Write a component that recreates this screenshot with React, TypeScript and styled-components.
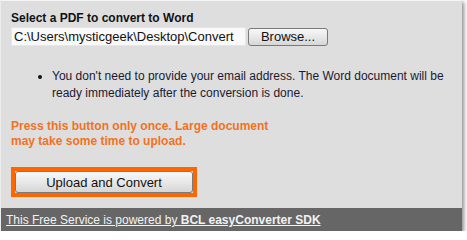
import React from "react";
import styled, { createGlobalStyle } from "styled-components";

const GlobalStyle = createGlobalStyle`
  body {
    margin: 0;
    background: #ffffff;
    font-family: "Liberation Sans", Arial, sans-serif;
  }
`;

// Styles
const Panel = styled.div`
  width: 462px;
  height: 231px;
  display: flex;
  flex-direction: column;
  background: #dedede;
  border-top: 1px solid #f4f4f4;
  border-left: 1px solid #ececec;
  box-sizing: border-box;
  box-shadow: 2px 2px 4px rgba(0, 0, 0, 0.45);
`;

const Content = styled.div`
  flex: 1;
  display: flex;
  flex-direction: column;
  align-items: flex-start;
  padding: 10px 0 0 10px;
`;

const Title = styled.div`
  font-size: 12px;
  line-height: 14px;
  font-weight: bold;
  color: #111111;
`;

const FileRow = styled.div`
  display: flex;
  align-items: center;
  gap: 2px;
  margin-top: 2px;
`;

const PathField = styled.div`
  width: 235px;
  height: 19px;
  box-sizing: border-box;
  background: #f9f9f9;
  border: 1px solid #e6e6e6;
  padding-left: 2px;
  font-size: 13px;
  line-height: 17px;
  color: #111111;
  white-space: nowrap;
  overflow: hidden;
`;

const GrayButton = styled.button<{ $w: number; $h: number }>`
  width: ${(p) => p.$w}px;
  height: ${(p) => p.$h}px;
  padding: 0;
  margin: 0;
  font-family: "Liberation Sans", Arial, sans-serif;
  font-size: 13px;
  color: #111111;
  background: linear-gradient(#f8f8f8, #e8e8e8 50%, #d6d6d6);
  border: 1px solid #7a7a7a;
  border-radius: 3px;
  box-sizing: border-box;
`;

const Notes = styled.div`
  display: flex;
  align-items: flex-start;
  margin-top: 22px;
`;

const Dot = styled.span`
  width: 4px;
  height: 4px;
  border-radius: 50%;
  background: #111111;
  flex: none;
  margin: 7px 10px 0 27px;
`;

const NoteText = styled.div`
  width: 410px;
  font-size: 12px;
  line-height: 17px;
  color: #1a1a30;
`;

const Warning = styled.div`
  margin-top: 17px;
  width: 280px;
  font-size: 12px;
  line-height: 15px;
  font-weight: bold;
  color: #f07224;
`;

const Highlight = styled.div`
  margin-top: 18px;
  border: 4px solid #ff6600;
  display: flex;
`;

const Footer = styled.div`
  height: 23px;
  flex: none;
  background: #666666;
  padding: 1px 0 0 5px;
  box-sizing: border-box;
  font-size: 12px;
  line-height: 22px;
  color: #f2f2f2;
  text-decoration: underline;
`;

export default function App() {
  return (
    <>
      <GlobalStyle />
      <Panel>
        <Content>
          <Title>Select a PDF to convert to Word</Title>
          <FileRow>
            <PathField>C:\Users\mysticgeek\Desktop\Convert</PathField>
            <GrayButton $w={80} $h={18}>
              Browse...
            </GrayButton>
          </FileRow>
          <Notes>
            <Dot />
            <NoteText>
              You don't need to provide your email address. The Word document
              will be ready immediately after the conversion is done.
            </NoteText>
          </Notes>
          <Warning>
            Press this button only once. Large document may take some time to
            upload.
          </Warning>
          <Highlight>
            <GrayButton $w={178} $h={22}>
              Upload and Convert
            </GrayButton>
          </Highlight>
        </Content>
        <Footer>
          This Free Service is powered by <b>BCL easyConverter SDK</b>
        </Footer>
      </Panel>
    </>
  );
}
